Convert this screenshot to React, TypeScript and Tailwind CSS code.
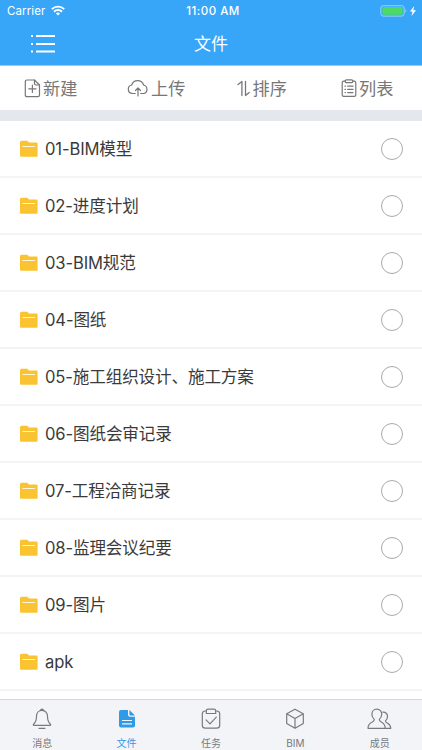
import { useState } from "react";
import type { ReactNode } from "react";

const folders = [
  "01-BIM模型",
  "02-进度计划",
  "03-BIM规范",
  "04-图纸",
  "05-施工组织设计、施工方案",
  "06-图纸会审记录",
  "07-工程洽商记录",
  "08-监理会议纪要",
  "09-图片",
  "apk",
];

const stroke = {
  fill: "none",
  stroke: "currentColor",
  strokeLinecap: "round" as const,
  strokeLinejoin: "round" as const,
};

/* ---------------- STATUS BAR ---------------- */

function StatusBar() {
  return (
    <div className="grid h-[22px] grid-cols-3 items-center pl-[7px] pr-[5px] text-[11px] leading-none">
      <div className="flex items-center gap-[6px]">
        <span className="pt-px text-[11.5px] tracking-[0.1px]">Carrier</span>
        <svg width="14" height="11" viewBox="0 0 14 11" className="-mt-px">
          <g fill="none" stroke="currentColor" strokeWidth="1.9">
            <path d="M0.8 4.2a8.8 8.8 0 0 1 12.4 0" />
            <path d="M3 6.7a5.7 5.7 0 0 1 8 0" />
          </g>
          <path d="M7 10.6L4.9 8.5a3 3 0 0 1 4.2 0z" fill="currentColor" />
        </svg>
      </div>
      <span className="whitespace-nowrap pl-[2px] pt-[2px] text-center text-[11.5px] font-medium tracking-[0.5px]">
        11:00 AM
      </span>
      <svg width="37" height="12" viewBox="0 0 37 12" className="justify-self-end">
        <rect x="0.9" y="0.7" width="23.2" height="10.4" rx="2.4" fill="none" stroke="#9bd2fb" />
        <rect x="2.4" y="2.1" width="20.2" height="7.6" rx="1.2" fill="#4cd964" />
        <path d="M25.4 4.1c1.2.4 1.2 3.2 0 3.6z" fill="#9bd2fb" />
        <path d="M34.2 1L29.9 6.5h2.6L31.5 11l4.5-5.7h-2.7z" fill="#fff" />
      </svg>
    </div>
  );
}

/* ---------------- ICONS ---------------- */

function MenuIcon() {
  return (
    <svg width="25" height="18" viewBox="0 0 25 18" fill="currentColor">
      <path d="M0 0h2v2H0zM5 0h19v2H5zM0 8h2v2H0zM5 8h19v2H5zM0 15.5h2v2H0zM5 15.5h19v2H5z" />
    </svg>
  );
}

function FolderIcon() {
  return (
    <svg width="18" height="17" viewBox="0 0 18 17">
      <path
        d="M1.500 0.800h5.800l1.700 1.600h7.600q1 0 1 1V15.700q0 1-1 1H1q-1 0-1-1V2.300q0-1.500 1.500-1.500z"
        fill="#fac332"
      />
      <path d="M2.400 6.500h12.600" stroke="#fff6dc" strokeWidth="1" />
    </svg>
  );
}

const tools: { label: string; icon: ReactNode }[] = [
  {
    label: "新建",
    icon: (
      <svg width="17" height="19" viewBox="0 0 17 19" {...stroke} strokeWidth="1.2">
        <path d="M3 1h7.500L15.500 6v10q0 1.700-1.700 1.700H3Q1.300 17.700 1.300 16V2.700Q1.300 1 3 1z" />
        <path d="M10.500 1v3.600q0 1.400 1.400 1.400h3.600M8.400 6.200v7.200M4.800 9.800H12" />
      </svg>
    ),
  },
  {
    label: "上传",
    icon: (
      <svg width="22" height="19" viewBox="0 0 22 19" {...stroke} strokeWidth="1.2">
        <path d="M8.200 14.500H5.500a4.300 4.300 0 0 1-.8-8.500A6.200 6.200 0 0 1 16.600 6a4.400 4.400 0 0 1 .2 8.500h-3.200" />
        <path d="M11 17V9.300M8.500 11.500L11 9l2.500 2.500" />
      </svg>
    ),
  },
  {
    label: "排序",
    icon: (
      <svg width="14" height="17" viewBox="0 0 14 17" {...stroke} strokeWidth="1.3">
        <path d="M1 4.500L4.900 1.500V15.500M8.500 1.500V15.500l3.700-3" />
      </svg>
    ),
  },
  {
    label: "列表",
    icon: (
      <svg width="16" height="19" viewBox="0 0 16 19" {...stroke} strokeWidth="1.2">
        <path d="M4.200 2.200H2.800q-1.600 0-1.600 1.600v12q0 1.600 1.600 1.600h10.400q1.600 0 1.600-1.600v-12q0-1.600-1.600-1.600h-1.400" />
        <rect x="4.200" y="0.900" width="7.600" height="2.800" rx="1.200" />
        <path d="M4 7.200h.4M6.700 7.200H12M4 10.400h.4M6.700 10.400H12M4 13.600h.4M6.700 13.600H12" />
      </svg>
    ),
  },
];

const tabs: { label: string; icon: ReactNode }[] = [
  {
    label: "消息",
    icon: (
      <svg width="20" height="22" viewBox="0 0 20 22" {...stroke} strokeWidth="1.2">
        <path d="M8.300 2.400a1.800 1.800 0 0 1 3.400 0M10 2.300C6.600 2.300 4.500 5 4.500 8.200c0 4.500-.9 6.100-2.900 8-.6.6-.4 1.200.4 1.200h16c.8 0 1-.6.4-1.200-2-1.900-2.900-3.500-2.900-8C15.500 5 13.400 2.300 10 2.300z" />
        <path d="M7 20.300h6" />
      </svg>
    ),
  },
  {
    label: "文件",
    icon: (
      <svg width="18" height="22" viewBox="0 0 18 22" fill="currentColor">
        <path d="M3 2h7v4.800Q10 8.800 12 8.800h5V17.500q0 2-2 2H3q-2 0-2-2V4Q1 2 3 2z" />
        <path d="M11.400 2L17 7.500h-4.400q-1.200 0-1.200-1.200z" />
        <path d="M4 12.500h10M4 15.900h10" stroke="#f3f4f7" strokeWidth="1.200" />
      </svg>
    ),
  },
  {
    label: "任务",
    icon: (
      <svg width="20" height="22" viewBox="0 0 20 22" {...stroke} strokeWidth="1.2">
        <path d="M5.300 3H4.300Q1.300 3 1.300 6v11.200Q1.300 20.200 4.300 20.200h11.400q3 0 3-3V6Q18.700 3 15.700 3h-1" />
        <path d="M5.300 5.500V3q0-1.800 1.800-1.800h5.800q1.800 0 1.800 1.800v2.500z" />
        <path d="M5 11.800l4 4 6.300-6.700" />
      </svg>
    ),
  },
  {
    label: "BIM",
    icon: (
      <svg width="20" height="22" viewBox="0 0 20 22" {...stroke} strokeWidth="1.2">
        <path d="M10 1.200l8.300 4.500v9.800L10 20.300l-8.300-4.800V5.700zM1.700 5.700l8.300 4.700 8.300-4.700M10 10.400v9.900" />
      </svg>
    ),
  },
  {
    label: "成员",
    icon: (
      <svg width="25" height="22" viewBox="0 0 25 22" {...stroke} strokeWidth="1.2">
        <path d="M9.800 1.200C6.800 1.200 4.900 3.400 4.900 6.200c0 2.500 1 4.100 2.400 5.200.3 1.500-.6 1.900-2.500 2.900-2.700 1.300-3.800 2.700-3.800 6h17.200c0-3.300-1-4.700-3.500-6-1.900-1-2.700-1.400-2.400-2.900 1.400-1.100 2.400-2.700 2.400-5.200 0-2.800-1.900-5-4.900-5z" />
        <path d="M15.800 4.200c2.900-.3 4.700 1.500 4.700 4.300 0 2-.7 3.300-2 4.300-.2 1.200.3 1.500 1.700 2.200 2.300 1.100 3.400 2.500 3.600 5.300h-5.600" />
      </svg>
    ),
  },
];

export default function App() {
  const [selected, setSelected] = useState<string[]>([]);
  const [activeTab, setActiveTab] = useState("文件");

  const toggle = (name: string) => {
    setSelected((prev) =>
      prev.includes(name) ? prev.filter((n) => n !== name) : [...prev, name]
    );
  };

  return (
    <div className="flex h-[750px] w-[422px] flex-col overflow-hidden bg-white font-['Inter','Noto_Sans_CJK_SC',sans-serif]">
      <header className="h-[66px] shrink-0 border-b border-[#8fcffb] bg-[#38a6f8] text-white">
        <StatusBar />
        <div className="grid h-[43px] grid-cols-3 items-center">
          <button className="pl-[31px]">
            <MenuIcon />
          </button>
          <h1 className="pt-px text-center text-[17px] font-normal leading-none">文件</h1>
        </div>
      </header>

      {/* Toolbar */}
      <div className="grid h-[44px] shrink-0 grid-cols-4 text-[#777]">
        {tools.map((tool) => (
          <button
            key={tool.label}
            className="-ml-[4px] flex items-center justify-center gap-[2px] text-[17.2px] font-normal leading-none"
          >
            {tool.icon}
            <span className="pt-[2px]">{tool.label}</span>
          </button>
        ))}
      </div>
      <div className="h-[11px] shrink-0 bg-[#e4e7ec]" />

      {/* Folder list */}
      <ul className="min-h-0 flex-1 overflow-hidden">
        {folders.map((name) => (
          <li
            key={name}
            className="flex h-[57px] items-center border-b-2 border-[#f4f4f4] pl-5 pr-[19px]"
          >
            <FolderIcon />
            <span className="ml-[7px] flex-1 pt-px text-[16.6px] leading-none tracking-[-0.14px] text-[#3a3a3a]">
              {name}
            </span>
            <button
              onClick={() => toggle(name)}
              className={`size-[22px] rounded-full border ${
                selected.includes(name) ? "border-[#38a6f8] bg-[#38a6f8]" : "border-[#aaa]"
              }`}
            />
          </li>
        ))}
      </ul>

      {/* Bottom tabs */}
      <nav className="grid h-[51px] shrink-0 grid-cols-5 border-t border-[#d5d7da] bg-[#f3f4f7]">
        {tabs.map((tab) => (
          <button
            key={tab.label}
            onClick={() => setActiveTab(tab.label)}
            className={`flex flex-col items-center gap-[8px] pt-[8px] text-[10px] leading-none ${
              activeTab === tab.label ? "text-[#2f9be8]" : "text-[#777b80]"
            }`}
          >
            {tab.icon}
            <span>{tab.label}</span>
          </button>
        ))}
      </nav>
    </div>
  );
}
